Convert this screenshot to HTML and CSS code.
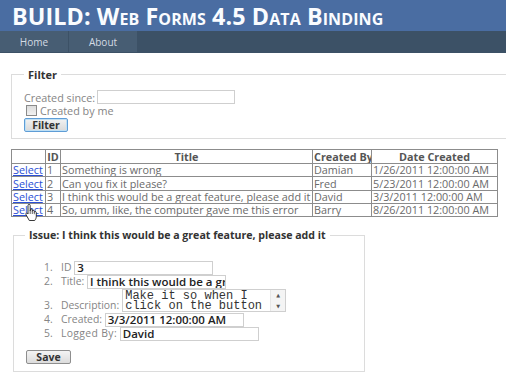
FILE: index.html
```html
<!DOCTYPE html>
<html>
<head>
<meta charset="utf-8">
<link rel="stylesheet" href="styles.css">
</head>
<body>
<div class="page">
  <header class="header">
    <h1 class="title">BUILD: Web Forms 4.5 Data Binding</h1>
  </header>
  <nav class="nav">
    <span class="tab">Home</span>
    <span class="tab">About</span>
  </nav>
  <main class="main">
    <fieldset class="filter">
      <legend class="legend">Filter</legend>
      <div class="row"><span class="lbl">Created since:</span><span class="input w138"></span></div>
      <div class="row check"><span class="box"></span><span class="lbl">Created by me</span></div>
      <div class="row"><span class="btn btn-blue">Filter</span></div>
    </fieldset>

    <div class="grid-wrap">
      <table class="grid">
        <colgroup>
          <col class="c1"><col class="c2"><col class="c3"><col class="c4"><col class="c5">
        </colgroup>
        <thead>
          <tr><th></th><th>ID</th><th>Title</th><th>Created By</th><th>Date Created</th></tr>
        </thead>
        <tbody>
          <tr><td><a class="link">Select</a></td><td>1</td><td>Something is wrong</td><td>Damian</td><td>1/26/2011 12:00:00 AM</td></tr>
          <tr class="tall"><td><a class="link">Select</a></td><td>2</td><td>Can you fix it please?</td><td>Fred</td><td>5/23/2011 12:00:00 AM</td></tr>
          <tr><td><a class="link">Select</a></td><td>3</td><td>I think this would be a great feature, please add it</td><td>David</td><td>3/3/2011 12:00:00 AM</td></tr>
          <tr><td><a class="link">Select</a></td><td>4</td><td>So, umm, like, the computer gave me this error</td><td>Barry</td><td>8/26/2011 12:00:00 AM</td></tr>
        </tbody>
      </table>
      <svg class="cursor" width="14" height="18" viewBox="0 0 14 18">
        <path d="M4 1.5c0-.8.5-1.2 1.1-1.2S6.2.7 6.2 1.5V7l.1-1c0-.7.5-1 1-1s1 .3 1 1v1.4c0-.7.5-1 1-1s1 .3 1 1v1c0-.6.5-.9 1-.9s1 .4 1 1.1v3.6c0 1.8-.6 3-1.6 4.3H5.3L2.2 11c-.5-.8-.4-1.5.1-1.8.5-.3 1.1-.1 1.5.4L4 10V1.5z" fill="#fff" stroke="#222" stroke-width="0.9" stroke-linejoin="round"/>
        <path d="M6.2 7v3M8.3 7.4v2.6M10.3 8.4v1.8" stroke="#222" stroke-width="0.7" fill="none"/>
      </svg>
    </div>

    <fieldset class="issue">
      <legend class="legend">Issue: I think this would be a great feature, please add it</legend>
      <ol class="fields">
        <li class="field"><span class="lbl">ID</span> <span class="input val">3</span></li>
        <li class="field"><span class="lbl">Title:</span> <span class="input val">I think this would be a great feature, please add it</span></li>
        <li class="field desc"><span class="desc-row"><span class="lbl">Description:</span><span class="textarea"><span class="ta-text">Make it so when I<br>click on the button</span><span class="scroll"><span class="arr">&#9650;</span><span class="arr">&#9660;</span></span></span></span></li>
        <li class="field"><span class="lbl">Created:</span> <span class="input val">3/3/2011 12:00:00 AM</span></li>
        <li class="field"><span class="lbl lbl-wide">Logged By:</span> <span class="input val">David</span></li>
      </ol>
      <div class="save-row"><span class="btn btn-gray">Save</span></div>
    </fieldset>
  </main>
</div>
</body>
</html>
```
FILE: styles.css
```css
html, body {
  margin: 0;
  padding: 0;
  background: #fff;
  overflow: hidden;
}
.page {
  width: 506px;
  height: 374px;
  overflow: hidden;
  font-family: "Open Sans", "DejaVu Sans", sans-serif;
}
.header {
  height: 31px;
  background: #4a6da2;
  display: flex;
  align-items: center;
  padding-left: 12px;
}
.title {
  margin: 0;
  font-family: "Open Sans", sans-serif;
  font-weight: 700;
  font-variant: small-caps;
  font-size: 23.3px;
  line-height: 26px;
  color: #fafcff;
  letter-spacing: 0.1px;
}
.nav {
  height: 22px;
  background: #3c5166;
  display: flex;
}
.tab {
  width: 68px;
  height: 21px;
  background: #475d73;
  border-right: 1px solid #3c5166;
  color: #d4dbe3;
  font-size: 10px;
  display: flex;
  align-items: center;
  justify-content: center;
}
.main {
  padding: 14px 0 0 11px;
}
.legend {
  font-weight: 700;
  color: #333;
  padding: 0 4px;
}
.filter {
  margin: 0 -30px 0 0;
  border: 1px solid #dcdcdc;
  padding: 8px 0 0 12px;
  height: 62px;
}
.filter .legend {
  font-size: 11px;
  margin-left: 0;
}
.row {
  display: flex;
  align-items: center;
  height: 14px;
}
.lbl {
  font-size: 10.4px;
  color: #858585;
}
.lbl-wide {
  letter-spacing: 0.35px;
}
.filter .lbl {
  font-size: 10.8px;
}
.input {
  display: inline-block;
  height: 12px;
  border: 1px solid #cfcfcf;
  background: #fff;
  overflow: hidden;
  white-space: nowrap;
  vertical-align: middle;
  box-sizing: content-box;
}
.w138 { width: 136px; margin-left: 2px; }
.check { height: 13px; margin: 0 0 1px; }
.box {
  width: 9px;
  height: 9px;
  border: 1px solid #8a8a8a;
  background: linear-gradient(#dcdcdc, #f2f2f2);
  margin: 0 3px 0 2px;
}
.btn {
  display: inline-flex;
  align-items: center;
  justify-content: center;
  height: 12px;
  font-size: 10.5px;
  font-weight: 700;
  color: #333;
  border-radius: 2px;
  box-sizing: content-box;
}
.btn-blue {
  width: 42px;
  border: 1px solid #5f9dd6;
  background: linear-gradient(#f2f2f2, #d9d9d9);
  box-shadow: inset 0 0 0 1px #bfe0f5;
}
.btn-gray {
  width: 43px;
  border: 1px solid #8e8e8e;
  background: linear-gradient(#f4f4f4, #dcdcdc);
}
.grid-wrap {
  position: relative;
  margin-top: 10px;
  width: 486px;
}
.grid {
  border-collapse: collapse;
  width: 486px;
  table-layout: fixed;
  font-family: "Open Sans", sans-serif;
  font-size: 10.8px;
  color: #6a6a6a;
}
.c1 { width: 34px; }
.c2 { width: 15px; }
.c3 { width: 252px; }
.c4 { width: 59px; }
.c5 { width: 126px; }
.grid th, .grid td {
  border: 1px solid #8c8c8c;
  padding: 0 1px;
  height: 12px;
  line-height: 12px;
  white-space: nowrap;
  overflow: hidden;
  text-align: left;
}
.grid th {
  font-weight: 700;
  color: #555;
  text-align: center;
  height: 13px;
}
.grid .tall td {
  height: 13px;
}
.link {
  color: #2b4fd6;
  text-decoration: underline;
}
.cursor {
  position: absolute;
  left: 13px;
  top: 55px;
}
.issue {
  margin: 11px 0 0 2px;
  width: 352px;
  border: 1px solid #dcdcdc;
  padding: 0;
  box-sizing: border-box;
  height: 144px;
}
.issue .legend {
  font-size: 10.6px;
  margin-left: 11px;
}
.fields {
  margin: 19px 0 0 0;
  padding: 0 0 0 30px;
  list-style: none;
  font-size: 10.4px;
  color: #858585;
}
.field {
  line-height: 13px;
  height: 13px;
  margin-bottom: 1px;
}
.field::before {
  content: counter(list-item) ".";
  display: inline-block;
  width: 17px;
}
.val {
  height: 12px;
  font-size: 11.5px;
  font-weight: 600;
  color: #222;
  line-height: 12px;
  padding-left: 2px;
  width: 135px;
}
.desc {
  height: auto;
  margin-bottom: 1px;
}
.desc-row {
  display: inline-flex;
  align-items: flex-end;
  gap: 3px;
}
.textarea {
  display: inline-flex;
  width: 164px;
  height: 23px;
  border: 1px solid #cfcfcf;
  background: #fff;
  box-sizing: border-box;
}
.ta-text {
  flex: 1;
  font-family: "Liberation Mono", monospace;
  font-size: 12px;
  line-height: 10px;
  color: #333;
  padding: 1px 0 0 2px;
  white-space: nowrap;
  overflow: hidden;
}
.scroll {
  width: 14px;
  background: #f4f4f4;
  border-left: 1px solid #e6e6e6;
  display: flex;
  flex-direction: column;
  justify-content: space-around;
  align-items: center;
}
.arr {
  font-size: 5px;
  color: #555;
  line-height: 6px;
}
.save-row {
  margin: 4px 0 0 12px;
}
```
